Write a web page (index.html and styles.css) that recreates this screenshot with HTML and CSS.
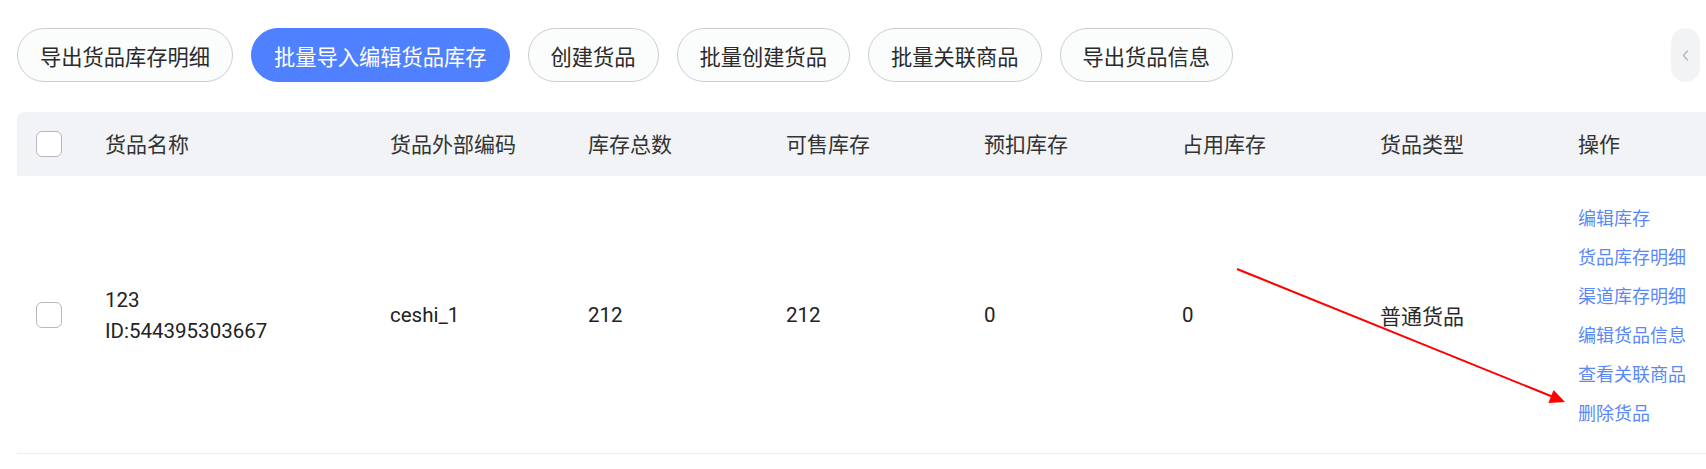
FILE: index.html
```html
<!DOCTYPE html>
<html lang="zh-CN">
<head>
<meta charset="utf-8">
<title>货品库存</title>
<link rel="stylesheet" href="styles.css">
</head>
<body>
<div class="page">
  <div class="toolbar">
    <button class="btn">导出货品库存明细</button>
    <button class="btn primary">批量导入编辑货品库存</button>
    <button class="btn">创建货品</button>
    <button class="btn">批量创建货品</button>
    <button class="btn">批量关联商品</button>
    <button class="btn">导出货品信息</button>
    <div class="scroll-pill">
      <svg width="7" height="11" viewBox="0 0 7 11"><path d="M5.5 1 L1.5 5.5 L5.5 10" fill="none" stroke="#b3b4bb" stroke-width="1.3" stroke-linecap="round" stroke-linejoin="round"/></svg>
    </div>
  </div>

  <div class="table">
    <div class="thead">
      <div class="cell check-cell"><span class="checkbox"></span></div>
      <div class="cell">货品名称</div>
      <div class="cell">货品外部编码</div>
      <div class="cell">库存总数</div>
      <div class="cell">可售库存</div>
      <div class="cell">预扣库存</div>
      <div class="cell">占用库存</div>
      <div class="cell">货品类型</div>
      <div class="cell">操作</div>
    </div>
    <div class="row">
      <div class="cell check-cell"><span class="checkbox"></span></div>
      <div class="cell name-cell">
        <span>123</span>
        <span>ID:544395303667</span>
      </div>
      <div class="cell">ceshi_1</div>
      <div class="cell">212</div>
      <div class="cell">212</div>
      <div class="cell">0</div>
      <div class="cell">0</div>
      <div class="cell type-cell">普通货品</div>
      <div class="cell actions">
        <a>编辑库存</a>
        <a>货品库存明细</a>
        <a>渠道库存明细</a>
        <a>编辑货品信息</a>
        <a>查看关联商品</a>
        <a>删除货品</a>
      </div>
    </div>
  </div>
</div>

<svg class="annotation" width="1706" height="469" viewBox="0 0 1706 469">
  <line x1="1237" y1="269" x2="1552" y2="396.5" stroke="#ff0000" stroke-width="2"/>
  <polygon points="1565,402 1548.4,402.9 1553.6,389.9" fill="#ff0000"/>
</svg>
</body>
</html>
```

FILE: styles.css
```css
html, body {
  margin: 0;
  padding: 0;
  background: #ffffff;
}

body {
  position: relative;
  width: 1706px;
  height: 469px;
  overflow: hidden;
  font-family: Roboto, "Noto Sans CJK SC", sans-serif;
  color: #222222;
}

.page {
  padding: 28px 6px 0 17px;
}

/* top action bar */
.toolbar {
  display: flex;
  align-items: center;
  gap: 18px;
  height: 54px;
}

.btn {
  display: inline-flex;
  align-items: center;
  height: 54px;
  padding: 0 22px;
  border: 1px solid #cdced5;
  border-radius: 27px;
  background: #fbfcfc;
  color: #2a2a2a;
  font-family: "Noto Sans CJK SC", sans-serif;
  font-size: 21.25px;
  white-space: nowrap;
  cursor: pointer;
}

.btn.primary {
  background: #4f80ff;
  border-color: #4f80ff;
  color: #ffffff;
}

.scroll-pill {
  margin-left: auto;
  width: 29px;
  height: 54px;
  border-radius: 15px;
  background: #f2f3f5;
  display: flex;
  align-items: center;
  justify-content: center;
}

/* goods table */
.table {
  margin-top: 30px;
  margin-right: -6px;
  overflow: hidden;
}

.thead,
.row {
  display: grid;
  grid-template-columns: 88px 285px 198px 198px 198px 198px 198px 198px 1fr;
  align-items: center;
}

.thead {
  height: 64px;
  background: #f2f3f6;
  border-top-left-radius: 8px;
  font-family: "Noto Sans CJK SC", sans-serif;
  font-size: 21px;
  color: #333333;
}

.thead .cell {
  padding-bottom: 3px;
}

.thead .check-cell {
  padding-bottom: 0;
}

.row {
  height: 277px;
  border-bottom: 1px solid #ebedf0;
  font-size: 20.5px;
  color: #222222;
}

.cell {
  white-space: nowrap;
}

.type-cell {
  font-size: 21px;
  color: #2a2a2a;
}

.check-cell {
  display: flex;
  align-items: center;
  padding-left: 19px;
}

.checkbox {
  display: block;
  width: 24px;
  height: 24px;
  border: 1px solid #b6b7c1;
  border-radius: 6px;
  background: #ffffff;
}

.name-cell {
  display: flex;
  flex-direction: column;
  line-height: 31px;
  padding-top: 2px;
}

.actions {
  display: flex;
  flex-direction: column;
  font-family: "Noto Sans CJK SC", sans-serif;
  font-size: 18px;
  line-height: 39px;
}

.actions a {
  color: #5a88f8;
  cursor: pointer;
}

/* red pointer drawn over the page */
.annotation {
  position: absolute;
  left: 0;
  top: 0;
  pointer-events: none;
}
```
